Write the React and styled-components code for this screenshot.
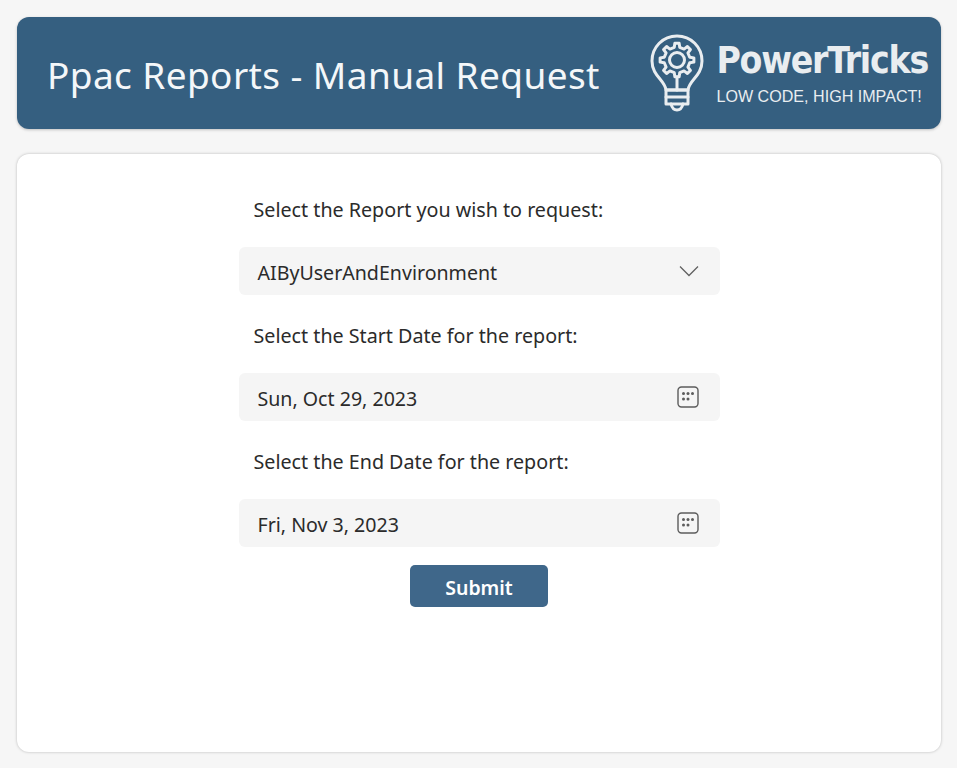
import React from "react";
import styled, { createGlobalStyle } from "styled-components";

const GlobalStyle = createGlobalStyle`
  html, body {
    margin: 0;
    background: #f6f6f6;
  }
  body {
    font-family: "Noto Sans", "Open Sans", sans-serif;
    color: #2b2b2b;
  }
`;

const Page = styled.div`
  display: flex;
  flex-direction: column;
  gap: 25px;
  width: 957px;
  height: 768px;
  box-sizing: border-box;
  padding: 17px 16px 16px 17px;
`;

const Header = styled.header`
  display: flex;
  align-items: center;
  justify-content: space-between;
  height: 112px;
  padding: 0 13px 0 30px;
  border-radius: 12px;
  background: #355f80;
  box-shadow: 0 1px 3px rgba(0, 0, 0, 0.22);
`;

const Title = styled.h1`
  margin: 3px 0 0;
  font-size: 37px;
  font-weight: 400;
  letter-spacing: 0.4px;
  color: #f4f7f9;
`;

const Logo = styled.div`
  display: flex;
  align-items: center;
  gap: 12px;
  color: #e9edf0;
`;

const LogoText = styled.div`
  display: flex;
  flex-direction: column;
  gap: 8px;
`;

const LogoName = styled.span`
  font-family: "DejaVu Sans Condensed", "DejaVu Sans", sans-serif;
  font-size: 37px;
  line-height: 38px;
  font-weight: 700;
  letter-spacing: -1.24px;
  white-space: nowrap;
`;

const LogoTag = styled.span`
  font-family: "Liberation Sans", sans-serif;
  font-size: 16.1px;
  line-height: 17px;
  white-space: nowrap;
`;

const Card = styled.main`
  flex: 1;
  display: flex;
  justify-content: center;
  padding-top: 15px;
  border-radius: 12px;
  background: #fff;
  box-shadow: 0 0 3px rgba(0, 0, 0, 0.25);
`;

const Form = styled.form`
  display: flex;
  flex-direction: column;
  width: 481px;
`;

const Label = styled.label`
  display: flex;
  align-items: center;
  height: 78px;
  padding: 2px 0 0 15px;
  box-sizing: border-box;
  font-size: 19.7px;
`;

const Field = styled.div`
  display: flex;
  align-items: center;
  justify-content: space-between;
  height: 48px;
  padding: 0 21px 0 19px;
  border-radius: 6px;
  background: #f5f5f5;
  font-size: 19.6px;
`;

const FieldValue = styled.span`
  margin-top: 2px;
`;

const Submit = styled.button`
  align-self: center;
  width: 138px;
  height: 42px;
  margin-top: 18px;
  padding: 2px 0 0;
  border: 0;
  border-radius: 5px;
  background: #3f678a;
  color: #fff;
  font-family: inherit;
  font-size: 19.5px;
  font-weight: 600;
`;

// eight rounded teeth round the bulb's centre
const gearPath = (cx, cy, inner, outer, teeth) => {
  const step = (Math.PI * 2) / teeth;
  const pt = (r, a) => `${(cx + r * Math.cos(a)).toFixed(2)} ${(cy + r * Math.sin(a)).toFixed(2)}`;
  let d = "";
  for (let i = 0; i < teeth; i++) {
    const a = i * step - Math.PI / 2;
    d += `${i === 0 ? "M" : "L"}${pt(inner, a - step * 0.27)} `;
    d += `L${pt(outer, a - step * 0.16)} L${pt(outer, a + step * 0.16)} L${pt(inner, a + step * 0.27)} `;
  }
  return d + "Z";
};

const GearBulb = () => (
  <svg width="54" height="78" viewBox="-1 -1 54 78" fill="none" stroke="currentColor" strokeWidth="3" strokeLinecap="round" strokeLinejoin="round">
    <path d="M15 55 C14 45 1 41 1 26 C1 12 12 1 26 1 C40 1 51 12 51 26 C51 41 38 45 37 55 Z" />
    <path d="M15 55 H37 V69 H15 Z" />
    <path d="M15 62 H37" />
    <path d="M20 69 C21 73 23 75 26 75 C29 75 31 73 32 69" />
    <path d="M26 42 V55" />
    <path d={gearPath(26, 25, 13, 17, 8)} />
    <circle cx="26" cy="25" r="7.5" />
  </svg>
);

const Chevron = () => (
  <svg width="20" height="12" viewBox="0 0 20 12" fill="none" stroke="#616161" strokeWidth="1.3">
    <path d="M1 1.5 L10 10.5 L19 1.5" />
  </svg>
);

const CalendarIcon = () => (
  <svg width="22" height="22" viewBox="0 0 22 22" fill="none">
    <rect x="1" y="1" width="20" height="20" rx="3.5" stroke="#5c5c5c" strokeWidth="1.4" />
    <g fill="#5c5c5c">
      <circle cx="6.5" cy="7.5" r="1.5" />
      <circle cx="11" cy="7.5" r="1.5" />
      <circle cx="15.5" cy="7.5" r="1.5" />
      <circle cx="6.5" cy="13" r="1.5" />
      <circle cx="11" cy="13" r="1.5" />
    </g>
  </svg>
);

export default function App() {
  return (
    <>
      <GlobalStyle />
      <Page>
        <Header>
          <Title>Ppac Reports - Manual Request</Title>
          <Logo>
            <GearBulb />
            <LogoText>
              <LogoName>PowerTricks</LogoName>
              <LogoTag>LOW CODE, HIGH IMPACT!</LogoTag>
            </LogoText>
          </Logo>
        </Header>
        <Card>
          <Form onSubmit={(e) => e.preventDefault()}>
            <Label>Select the Report you wish to request:</Label>
            <Field>
              <FieldValue>AIByUserAndEnvironment</FieldValue>
              <Chevron />
            </Field>
            <Label>Select the Start Date for the report:</Label>
            <Field>
              <FieldValue>Sun, Oct 29, 2023</FieldValue>
              <CalendarIcon />
            </Field>
            <Label>Select the End Date for the report:</Label>
            <Field>
              <FieldValue>Fri, Nov 3, 2023</FieldValue>
              <CalendarIcon />
            </Field>
            <Submit type="submit">Submit</Submit>
          </Form>
        </Card>
      </Page>
    </>
  );
}
